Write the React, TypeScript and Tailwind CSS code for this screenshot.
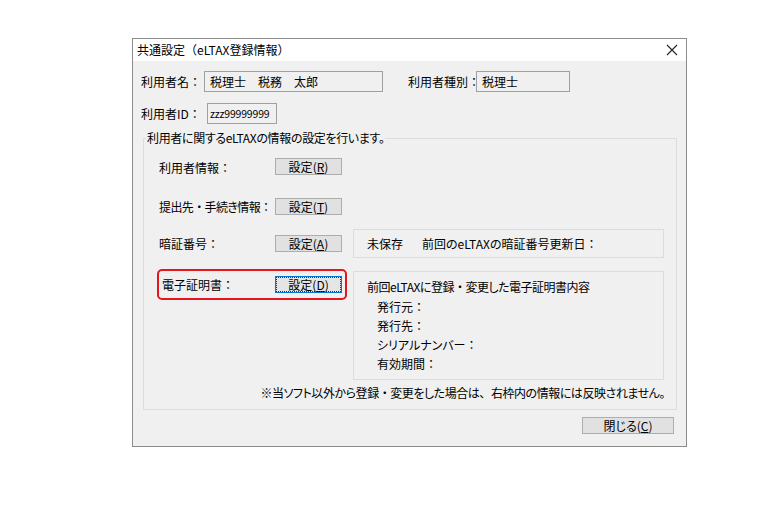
import React from 'react';

const font = "[font-family:'Noto_Sans_CJK_JP','Noto_Sans',sans-serif]";
const palt = "[font-feature-settings:'palt']";

// full-width punctuation inside a palt run
const P: React.FC<{ c: string }> = ({ c }) => <span className="[font-feature-settings:normal]">{c}</span>;

const Btn: React.FC<{ label: string; k: string; focused?: boolean; w?: string }> = ({ label, k, focused, w = 'w-[67px]' }) => (
  <button
    className={`${w} shrink-0 h-[17px] flex items-center justify-center text-[12px] leading-none text-black ${palt} ${
      focused ? 'border border-[#0078d7] bg-[#e5e5e5] p-[1px]' : 'border border-[#adadad] bg-[#e1e1e1]'
    }`}
  >
    <span className={`flex items-center justify-center w-full h-full ${focused ? 'outline outline-1 outline-dotted outline-[#333]' : ''}`}>
      {label}(<span className="underline underline-offset-1">{k}</span>)
    </span>
  </button>
);

const Field: React.FC<{ text: string; w: string; mono?: boolean }> = ({ text, w, mono }) => (
  <div className={`${w} shrink-0 h-[21px] border border-[#a0a0a0] bg-[#f0f0f0] flex items-center ${mono ? 'pl-[2px] text-[10.5px] tracking-[-0.2px]' : 'pl-[5px] text-[12px]'} whitespace-pre`}>
    {text}
  </div>
);

export default function App() {
  return (
    <div className={`w-[768px] h-[512px] bg-white overflow-hidden text-black ${font}`}>
      <div className="ml-[132px] mt-[38px] w-[555px] h-[409px] border border-[#8c8c8c] bg-[#f0f0f0] flex flex-col">
        {/* title bar */}
        <div className="h-[22px] bg-white flex items-center justify-between pl-[4px] pr-[7px] text-[12px]">
          <span>共通設定（eLTAX登録情報）</span>
          <svg width="12" height="12" viewBox="0 0 12 12" className="mr-[1px]">
            <path d="M1 1 L11 11 M11 1 L1 11" stroke="#222" strokeWidth="1.1" />
          </svg>
        </div>

        {/* user rows */}
        <div className="mt-[10px] pl-[8px] flex items-center text-[12px] whitespace-nowrap">
          <span className="w-[63px]">利用者名：</span>
          <Field text="税理士　税務　太郎" w="w-[179px]" />
          <span className="ml-[25px] w-[68px]">利用者種別：</span>
          <Field text="税理士" w="w-[94px]" />
        </div>
        <div className="mt-[11px] pl-[8px] flex items-center text-[12px] whitespace-nowrap">
          <span className="w-[66px]">利用者ID：</span>
          <Field text="zzz99999999" w="w-[70px]" mono />
        </div>

        {/* group */}
        <fieldset className="mt-[7px] ml-[10px] mr-[9px] h-[279px] border border-[#dcdcdc] p-0 text-[12px] whitespace-nowrap">
          <legend className={`ml-[2px] px-[1px] leading-[14px] tracking-[-0.35px] ${palt}`}>利用者に関するeLTAXの情報の設定を行います。</legend>

          <div className="mt-[13px] flex items-center h-[17px] pl-[15px]">
            <span className="w-[116px] pt-[2px]">利用者情報：</span>
            <Btn label="設定" k="R" />
          </div>

          <div className="mt-[23px] flex items-center h-[17px] pl-[15px]">
            <span className={`w-[116px] tracking-[-0.6px] ${palt}`}>提出先<P c="・" />手続き情報<P c="：" /></span>
            <Btn label="設定" k="T" />
          </div>

          <div className="mt-[14px] flex items-center h-[29px] pl-[15px]">
            <span className="w-[116px]">暗証番号：</span>
            <Btn label="設定" k="A" />
            <div className={`ml-[11px] w-[311px] h-[29px] border border-[#dcdcdc] flex items-center pl-[13px] ${palt}`}>
              <span className="w-[55px]">未保存</span>
              <span>前回のeLTAXの暗証番号更新日<P c="：" /></span>
            </div>
          </div>

          <div className="mt-[11px] flex items-start pl-[13px]">
            <div className="w-[190px] h-[31px] border-2 border-[#e8141e] rounded-[5px] flex items-center pl-[3px]">
              <span className="w-[113px]">電子証明書：</span>
              <Btn label="設定" k="D" focused />
            </div>
            <div className="ml-[6px] mt-[2px] w-[311px] h-[109px] border border-[#dcdcdc] pl-[13px] pt-[7px] flex flex-col">
              <span className={`h-[16px] leading-[16px] tracking-[-0.5px] ${palt}`}>前回eLTAXに登録<P c="・" />変更した電子証明書内容</span>
              <div className="pl-[10px] flex flex-col">
                <span className="mt-[4px] h-[16px] leading-[16px]">発行元：</span>
                <span className="mt-[3px] h-[16px] leading-[16px]">発行先：</span>
                <span className={`mt-[3px] h-[16px] leading-[16px] ${palt}`}>シリアルナンバー<P c="：" /></span>
                <span className="mt-[3px] h-[16px] leading-[16px]">有効期間：</span>
              </div>
            </div>
          </div>

          <div className={`mt-[6px] pr-[11px] text-right leading-[14px] tracking-[-0.45px] ${palt}`}>
            ※当ソフト以外から登録<P c="・" />変更をした場合は<P c="、" />右枠内の情報には反映されません。
          </div>
        </fieldset>

        <div className="mt-[7px] mr-[12px] flex justify-end">
          <Btn label="閉じる" k="C" w="w-[92px]" />
        </div>
      </div>
    </div>
  );
}
